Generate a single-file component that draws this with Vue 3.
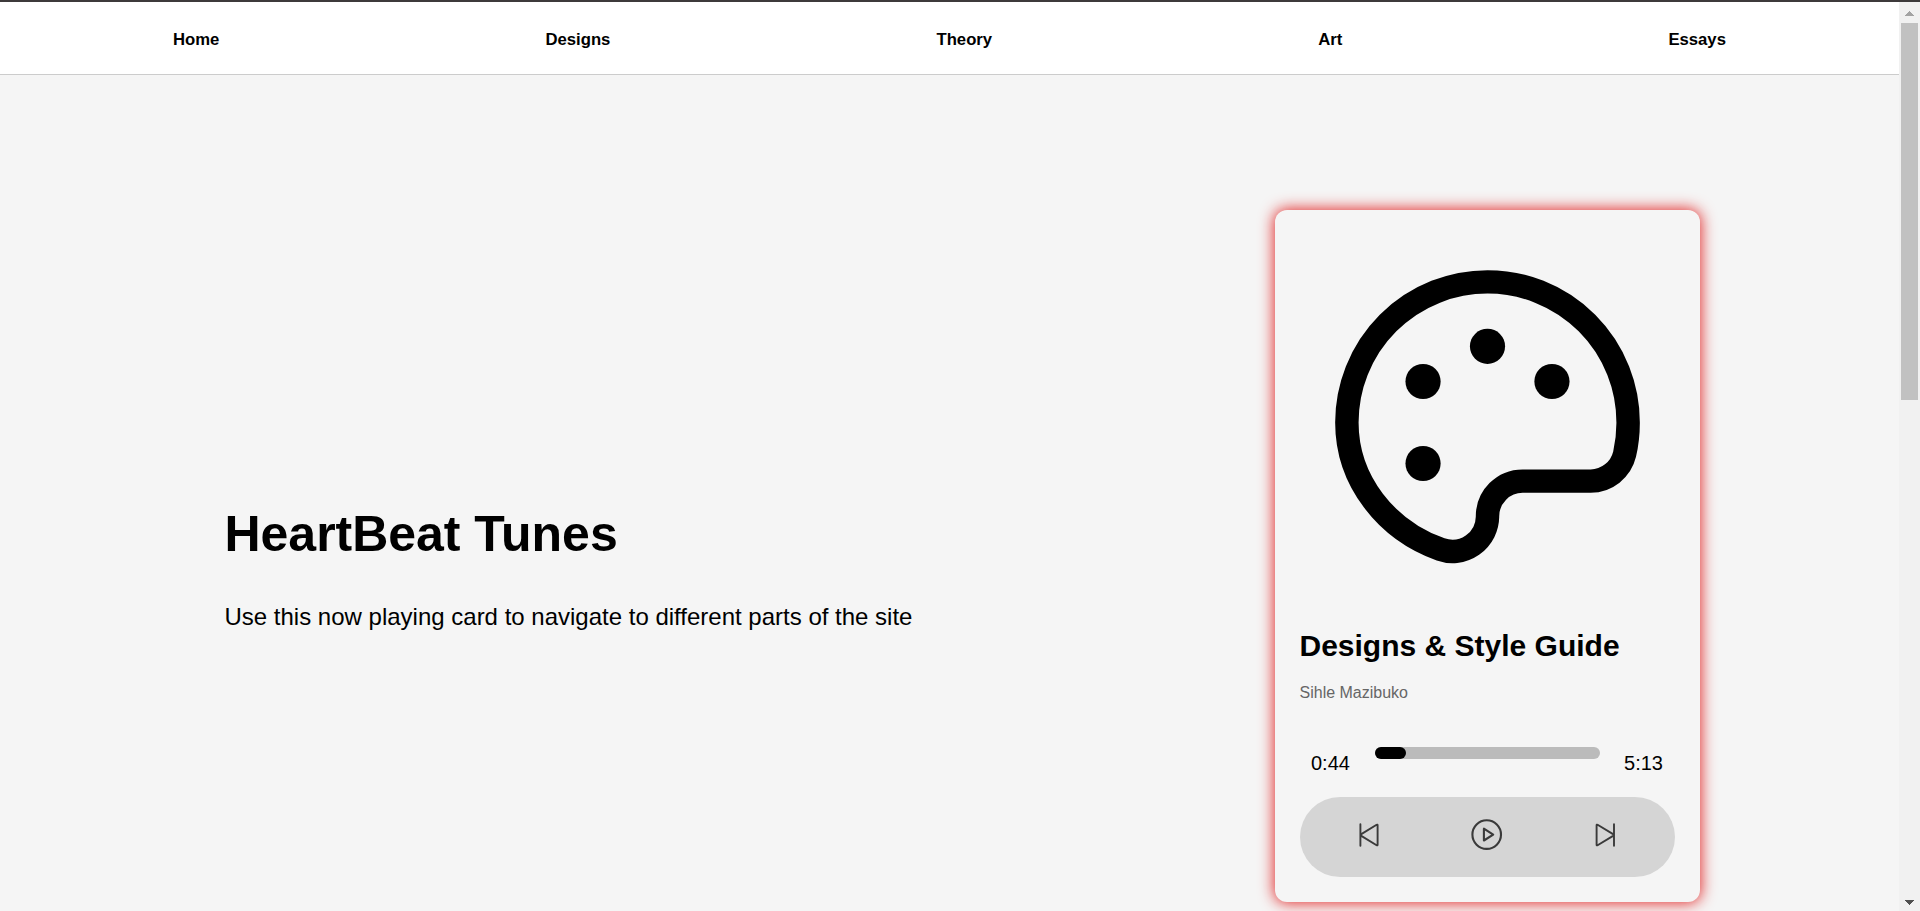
<script setup>
const links = ['Home', 'Designs', 'Theory', 'Art', 'Essays']
const progress = (31 / 225) * 100
</script>

<template>
  <div class="page">
    <div class="content">
      <nav class="nav">
        <a v-for="link in links" :key="link">{{ link }}</a>
      </nav>
      <main class="hero">
        <section class="intro">
          <h1>HeartBeat Tunes</h1>
          <p>Use this now playing card to navigate to different parts of the site</p>
        </section>
        <article class="card">
          <svg class="cover" viewBox="0 0 32 32">
            <path
              d="M28 16A12 12 0 0 0 4 16C4 21 7.4 25.2 12 26.83A3 3 0 0 0 16 24.05V24A3 3 0 0 1 19 21H24.8A3 3 0 0 0 27.7 18.7A12 12 0 0 0 28 16Z"
              fill="none" stroke="#000" stroke-width="2" stroke-linejoin="round" />
            <circle cx="16" cy="9.5" r="1.5" />
            <circle cx="10.5" cy="12.5" r="1.5" />
            <circle cx="21.5" cy="12.5" r="1.5" />
            <circle cx="10.5" cy="19.5" r="1.5" />
          </svg>
          <h2>Designs &amp; Style Guide</h2>
          <p class="artist">Sihle Mazibuko</p>
          <div class="timeline">
            <span class="time">0:44</span>
            <div class="track"><div class="fill" :style="{ width: progress + '%' }"></div></div>
            <span class="time">5:13</span>
          </div>
          <div class="controls">
            <svg class="icon" viewBox="0 0 36 36">
              <path d="M10.4 7.2V28.8M27.6 8.3V27.7Q27.6 28.8 26.6 28.2L10.9 18.6Q10.4 18 10.9 17.4L26.6 7.8Q27.6 7.2 27.6 8.3Z" />
            </svg>
            <svg class="icon play" viewBox="0 0 36 36">
              <circle cx="17.7" cy="17.6" r="14.3" />
              <path d="M14.9 11.7V23.5L24.2 17.6Z" />
            </svg>
            <svg class="icon" viewBox="0 0 36 36">
              <path d="M27 7.2V28.8M9.6 8.3V27.7Q9.6 28.8 10.6 28.2L26.5 18.6Q27 18 26.5 17.4L10.6 7.8Q9.6 7.2 9.6 8.3Z" />
            </svg>
          </div>
        </article>
      </main>
    </div>
    <aside class="scrollbar">
      <svg class="arrow" width="9" height="5" viewBox="0 0 9 5" shape-rendering="crispEdges"><path d="M4 0h1v1h1v1h1v1h1v1h1v1H0V4h1V3h1V2h1V1h1z" fill="#a3a3a3" /></svg>
      <div class="thumb"></div>
      <svg class="arrow down" width="9" height="5" viewBox="0 0 9 5" shape-rendering="crispEdges"><path d="M0 0h9v1H8v1H7v1H6v1H5v1H4V4H3V3H2V2H1V1H0z" fill="#505050" /></svg>
    </aside>
  </div>
</template>

<style>
body {
  margin: 0;
  overflow: hidden;
}
</style>

<style scoped>
.page {
  box-sizing: border-box;
  display: flex;
  height: 911px;
  overflow: hidden;
  border-top: 2px solid #3d3a3b;
  background: #f5f5f5;
  color: #000;
  font-family: Arial, 'Liberation Sans', sans-serif;
}
.content {
  width: 1899px;
}
.nav {
  box-sizing: border-box;
  display: flex;
  justify-content: space-around;
  align-items: center;
  height: 73px;
  padding: 3px 10px 0;
  border-bottom: 1px solid #ccc;
  background: #fff;
}
.nav a {
  font-size: 16.7px;
  font-weight: 700;
  line-height: 20px;
}
.hero {
  display: flex;
  justify-content: space-between;
  padding: 135px 199px 0 224.5px;
}
.intro {
  padding-top: 290px;
}
h1 {
  margin: 0;
  font-size: 50px;
  line-height: 68px;
  letter-spacing: -0.03px;
}
.intro p {
  margin: 33px 0 0;
  font-size: 24px;
  line-height: 32px;
}
.card {
  box-sizing: border-box;
  width: 425px;
  height: 692px;
  padding: 25px;
  border-radius: 12px;
  background: #f5f5f5;
  box-shadow: 0 0 15px 1px #e22828;
}
.cover {
  display: block;
  width: 375px;
  height: 375px;
}
h2 {
  margin: 18px 0 0 -0.5px;
  font-size: 30px;
  line-height: 36px;
}
.artist {
  margin: 19px 0 0 -0.5px;
  color: #666;
  font-size: 16px;
  line-height: 20px;
}
.timeline {
  display: flex;
  justify-content: space-between;
  margin-top: 44px;
  padding: 0 12px 0 11px;
}
.time {
  padding-top: 4px;
  font-size: 20px;
  line-height: 24px;
}
.track {
  width: 225px;
  height: 12px;
  margin-left: 0.5px;
  border-radius: 6px;
  background: #bbb;
}
.fill {
  height: 12px;
  border-radius: 6px;
  background: #000;
}
.controls {
  box-sizing: border-box;
  display: flex;
  justify-content: space-between;
  height: 80px;
  margin-top: 22px;
  padding: 20px 52px 20px 50px;
  border-radius: 40px;
  background: #d5d5d5;
}
.icon {
  width: 36px;
  height: 36px;
  fill: none;
  stroke: #3a3a3a;
  stroke-width: 1.9;
  stroke-linecap: round;
  stroke-linejoin: round;
}
.play {
  stroke-width: 2.1;
}
.scrollbar {
  box-sizing: border-box;
  display: flex;
  flex-direction: column;
  align-items: flex-start;
  width: 21px;
  padding: 9px 1px 6px 2px;
  background: #f1f1f1;
}
.thumb {
  width: 17px;
  height: 377px;
  margin-top: 7px;
  background: #c1c1c1;
}
.arrow {
  margin-left: 4px;
}
.down {
  margin-top: auto;
}
</style>
